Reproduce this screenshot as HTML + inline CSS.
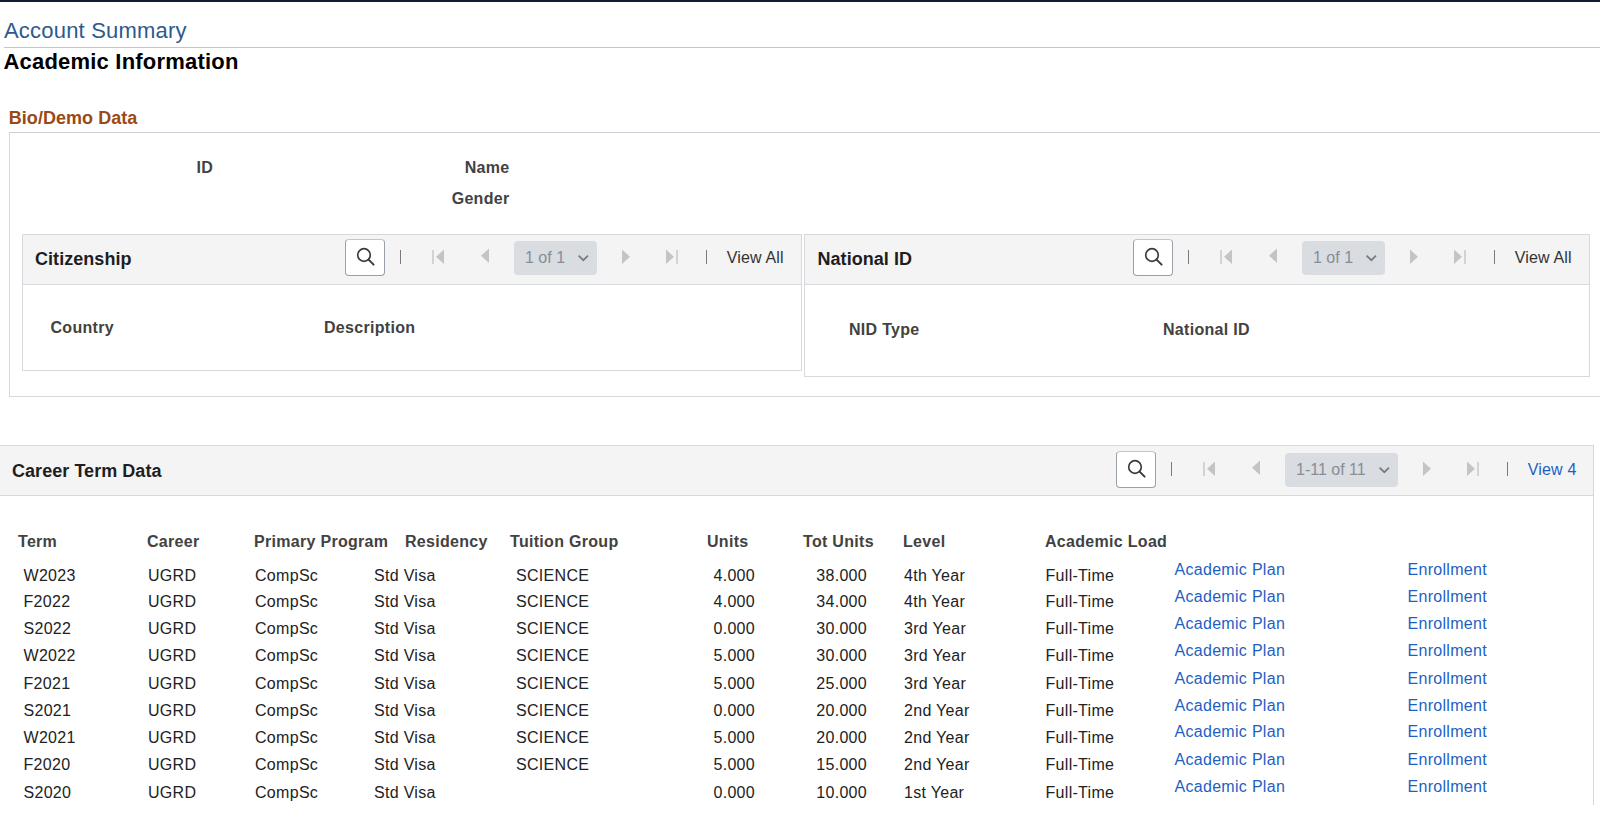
<!DOCTYPE html>
<html><head><meta charset="utf-8"><title>Academic Information</title>
<style>
html,body{margin:0;padding:0;background:#fff;width:1600px;height:829px;overflow:hidden;position:relative}
.t{position:absolute;font-family:"Liberation Sans", sans-serif;line-height:1;white-space:nowrap}
.b{position:absolute;box-sizing:content-box}
</style></head><body>
<div class="b" style="left:0px;top:0px;width:1600px;height:2px;background:#0f1d2e"></div>
<div class="t" style="left:4px;top:20px;font-size:22px;font-weight:400;color:#2c5a8c;letter-spacing:0.2px;">Account Summary</div>
<div class="b" style="left:4px;top:47px;width:1596px;height:1px;background:#c6c6c6"></div>
<div class="t" style="left:3.5px;top:51px;font-size:22px;font-weight:700;color:#000;letter-spacing:0.2px;">Academic Information</div>
<div class="t" style="left:8.75px;top:109px;font-size:18px;font-weight:700;color:#9a4a14;letter-spacing:0.05px;">Bio/Demo Data</div>
<div class="b" style="left:9px;top:132px;width:1600px;height:263px;border:1px solid #d6dadf;border-top-color:#c9d0d7;border-right:none"></div>
<div class="t" style="left:196.5px;top:160px;font-size:16px;font-weight:700;color:#424242;letter-spacing:0.3px;">ID</div>
<div class="t" style="right:1090.5px;top:160px;font-size:16px;font-weight:700;color:#424242;text-align:right;letter-spacing:0.3px;">Name</div>
<div class="t" style="right:1090.5px;top:191px;font-size:16px;font-weight:700;color:#424242;text-align:right;letter-spacing:0.3px;">Gender</div>
<div class="b" style="left:22px;top:234px;width:778px;height:135px;border:1px solid #d6dadf"></div>
<div class="b" style="left:23px;top:235px;width:778px;height:49px;background:#f4f4f4;border-bottom:1px solid #d6dadf"></div>
<div class="t" style="left:35px;top:250px;font-size:18px;font-weight:700;color:#1e1e1e;letter-spacing:0.05px;">Citizenship</div>
<div class="b" style="left:345px;top:239px;width:38px;height:35px;background:#fff;border:1px solid #9aa0a7;border-top-color:#c3c7cb;border-radius:4px"></div>
<svg class="b" style="left:355px;top:245px" width="22" height="22" viewBox="0 0 22 22"><circle cx="9" cy="10" r="6.3" fill="none" stroke="#3c3c3c" stroke-width="1.7"/><line x1="13.6" y1="14.6" x2="18.6" y2="19.6" stroke="#3c3c3c" stroke-width="2" stroke-linecap="round"/></svg>
<div class="b" style="left:400px;top:250px;width:1px;height:14px;background:#7a7684"></div>
<div class="b" style="left:432px;top:250px;width:2px;height:14px;background:#d3d3d3"></div>
<svg class="b" style="left:435px;top:249px" width="10" height="16" viewBox="0 0 10 16"><path d="M9 0.6 L9 15 L1 7.8 Z" fill="#c4c4c4"/></svg>
<svg class="b" style="left:480px;top:248px" width="10" height="16" viewBox="0 0 10 16"><path d="M9 0.4 L9 15 L1 7.7 Z" fill="#c4c4c4"/></svg>
<div class="b" style="left:514px;top:241px;width:83px;height:34px;background:#d9dce1;border-radius:4px"></div>
<div class="t" style="left:525px;top:250px;font-size:16px;font-weight:400;color:#878d95;">1 of 1</div>
<svg class="b" style="left:577px;top:253px" width="14" height="10" viewBox="0 0 14 10"><path d="M1.6 2.6 L6.3 7.2 L11 2.6" fill="none" stroke="#767c84" stroke-width="1.7"/></svg>
<svg class="b" style="left:621px;top:249px" width="10" height="16" viewBox="0 0 10 16"><path d="M1 0.6 L1 15 L9 7.8 Z" fill="#c4c4c4"/></svg>
<svg class="b" style="left:665px;top:249px" width="10" height="16" viewBox="0 0 10 16"><path d="M1 0.6 L1 15 L9 7.8 Z" fill="#c4c4c4"/></svg>
<div class="b" style="left:676px;top:250px;width:2px;height:14px;background:#d3d3d3"></div>
<div class="b" style="left:706px;top:250px;width:1px;height:14px;background:#7d7780"></div>
<div class="t" style="left:726.8px;top:250px;font-size:16px;font-weight:400;color:#333;letter-spacing:0.15px;">View All</div>
<div class="t" style="left:50.5px;top:320px;font-size:16px;font-weight:700;color:#424242;letter-spacing:0.3px;">Country</div>
<div class="t" style="left:324px;top:320px;font-size:16px;font-weight:700;color:#424242;letter-spacing:0.3px;">Description</div>
<div class="b" style="left:804px;top:234px;width:784px;height:141px;border:1px solid #d6dadf"></div>
<div class="b" style="left:805px;top:235px;width:784px;height:49px;background:#f4f4f4;border-bottom:1px solid #d6dadf"></div>
<div class="t" style="left:817.5px;top:250px;font-size:18px;font-weight:700;color:#1e1e1e;letter-spacing:0.05px;">National ID</div>
<div class="b" style="left:1133px;top:239px;width:38px;height:35px;background:#fff;border:1px solid #9aa0a7;border-top-color:#c3c7cb;border-radius:4px"></div>
<svg class="b" style="left:1143px;top:245px" width="22" height="22" viewBox="0 0 22 22"><circle cx="9" cy="10" r="6.3" fill="none" stroke="#3c3c3c" stroke-width="1.7"/><line x1="13.6" y1="14.6" x2="18.6" y2="19.6" stroke="#3c3c3c" stroke-width="2" stroke-linecap="round"/></svg>
<div class="b" style="left:1188px;top:250px;width:1px;height:14px;background:#7a7684"></div>
<div class="b" style="left:1220px;top:250px;width:2px;height:14px;background:#d3d3d3"></div>
<svg class="b" style="left:1223px;top:249px" width="10" height="16" viewBox="0 0 10 16"><path d="M9 0.6 L9 15 L1 7.8 Z" fill="#c4c4c4"/></svg>
<svg class="b" style="left:1268px;top:248px" width="10" height="16" viewBox="0 0 10 16"><path d="M9 0.4 L9 15 L1 7.7 Z" fill="#c4c4c4"/></svg>
<div class="b" style="left:1302px;top:241px;width:83px;height:34px;background:#d9dce1;border-radius:4px"></div>
<div class="t" style="left:1313px;top:250px;font-size:16px;font-weight:400;color:#878d95;">1 of 1</div>
<svg class="b" style="left:1365px;top:253px" width="14" height="10" viewBox="0 0 14 10"><path d="M1.6 2.6 L6.3 7.2 L11 2.6" fill="none" stroke="#767c84" stroke-width="1.7"/></svg>
<svg class="b" style="left:1409px;top:249px" width="10" height="16" viewBox="0 0 10 16"><path d="M1 0.6 L1 15 L9 7.8 Z" fill="#c4c4c4"/></svg>
<svg class="b" style="left:1453px;top:249px" width="10" height="16" viewBox="0 0 10 16"><path d="M1 0.6 L1 15 L9 7.8 Z" fill="#c4c4c4"/></svg>
<div class="b" style="left:1464px;top:250px;width:2px;height:14px;background:#d3d3d3"></div>
<div class="b" style="left:1494px;top:250px;width:1px;height:14px;background:#7d7780"></div>
<div class="t" style="left:1514.8px;top:250px;font-size:16px;font-weight:400;color:#333;letter-spacing:0.15px;">View All</div>
<div class="t" style="left:849px;top:322px;font-size:16px;font-weight:700;color:#424242;letter-spacing:0.3px;">NID Type</div>
<div class="t" style="left:1163px;top:322px;font-size:16px;font-weight:700;color:#424242;letter-spacing:0.3px;">National ID</div>
<div class="b" style="left:-1px;top:445px;width:1593px;height:359px;border:1px solid #d6dadf;border-bottom:none"></div>
<div class="b" style="left:0px;top:446px;width:1593px;height:49px;background:#f4f4f4;border-bottom:1px solid #d6dadf"></div>
<div class="t" style="left:12px;top:462px;font-size:18px;font-weight:700;color:#1e1e1e;letter-spacing:0.05px;">Career Term Data</div>
<div class="b" style="left:1116px;top:451px;width:38px;height:35px;background:#fff;border:1px solid #9aa0a7;border-top-color:#c3c7cb;border-radius:4px"></div>
<svg class="b" style="left:1126px;top:457px" width="22" height="22" viewBox="0 0 22 22"><circle cx="9" cy="10" r="6.3" fill="none" stroke="#3c3c3c" stroke-width="1.7"/><line x1="13.6" y1="14.6" x2="18.6" y2="19.6" stroke="#3c3c3c" stroke-width="2" stroke-linecap="round"/></svg>
<div class="b" style="left:1171px;top:462px;width:1px;height:14px;background:#7a7684"></div>
<div class="b" style="left:1203px;top:462px;width:2px;height:14px;background:#d3d3d3"></div>
<svg class="b" style="left:1206px;top:461px" width="10" height="16" viewBox="0 0 10 16"><path d="M9 0.6 L9 15 L1 7.8 Z" fill="#c4c4c4"/></svg>
<svg class="b" style="left:1251px;top:460px" width="10" height="16" viewBox="0 0 10 16"><path d="M9 0.4 L9 15 L1 7.7 Z" fill="#c4c4c4"/></svg>
<div class="b" style="left:1285px;top:453px;width:113px;height:34px;background:#d9dce1;border-radius:4px"></div>
<div class="t" style="left:1296px;top:462px;font-size:16px;font-weight:400;color:#878d95;">1-11 of 11</div>
<svg class="b" style="left:1378px;top:465px" width="14" height="10" viewBox="0 0 14 10"><path d="M1.6 2.6 L6.3 7.2 L11 2.6" fill="none" stroke="#767c84" stroke-width="1.7"/></svg>
<svg class="b" style="left:1422px;top:461px" width="10" height="16" viewBox="0 0 10 16"><path d="M1 0.6 L1 15 L9 7.8 Z" fill="#c4c4c4"/></svg>
<svg class="b" style="left:1466px;top:461px" width="10" height="16" viewBox="0 0 10 16"><path d="M1 0.6 L1 15 L9 7.8 Z" fill="#c4c4c4"/></svg>
<div class="b" style="left:1477px;top:462px;width:2px;height:14px;background:#d3d3d3"></div>
<div class="b" style="left:1507px;top:462px;width:1px;height:14px;background:#7d7780"></div>
<div class="t" style="left:1527.8px;top:462px;font-size:16px;font-weight:400;color:#1f5fc4;letter-spacing:0.15px;">View 4</div>
<div class="t" style="left:18px;top:534px;font-size:16px;font-weight:700;color:#424242;letter-spacing:0.3px;">Term</div>
<div class="t" style="left:147px;top:534px;font-size:16px;font-weight:700;color:#424242;letter-spacing:0.3px;">Career</div>
<div class="t" style="left:254px;top:534px;font-size:16px;font-weight:700;color:#424242;letter-spacing:0.3px;">Primary Program</div>
<div class="t" style="left:405px;top:534px;font-size:16px;font-weight:700;color:#424242;letter-spacing:0.3px;">Residency</div>
<div class="t" style="left:510px;top:534px;font-size:16px;font-weight:700;color:#424242;letter-spacing:0.3px;">Tuition Group</div>
<div class="t" style="left:707px;top:534px;font-size:16px;font-weight:700;color:#424242;letter-spacing:0.3px;">Units</div>
<div class="t" style="left:803px;top:534px;font-size:16px;font-weight:700;color:#424242;letter-spacing:0.3px;">Tot Units</div>
<div class="t" style="left:903px;top:534px;font-size:16px;font-weight:700;color:#424242;letter-spacing:0.3px;">Level</div>
<div class="t" style="left:1045px;top:534px;font-size:16px;font-weight:700;color:#424242;letter-spacing:0.3px;">Academic Load</div>
<div class="t" style="left:23.5px;top:568px;font-size:16px;font-weight:400;color:#222;letter-spacing:0.3px;">W2023</div>
<div class="t" style="left:148px;top:568px;font-size:16px;font-weight:400;color:#222;letter-spacing:0.3px;">UGRD</div>
<div class="t" style="left:255px;top:568px;font-size:16px;font-weight:400;color:#222;letter-spacing:0.3px;">CompSc</div>
<div class="t" style="left:374px;top:568px;font-size:16px;font-weight:400;color:#222;letter-spacing:0.3px;">Std Visa</div>
<div class="t" style="left:516px;top:568px;font-size:16px;font-weight:400;color:#222;letter-spacing:0.3px;">SCIENCE</div>
<div class="t" style="right:845px;top:568px;font-size:16px;font-weight:400;color:#222;text-align:right;letter-spacing:0.3px;">4.000</div>
<div class="t" style="right:733px;top:568px;font-size:16px;font-weight:400;color:#222;text-align:right;letter-spacing:0.3px;">38.000</div>
<div class="t" style="left:904px;top:568px;font-size:16px;font-weight:400;color:#222;letter-spacing:0.3px;">4th Year</div>
<div class="t" style="left:1045.5px;top:568px;font-size:16px;font-weight:400;color:#222;letter-spacing:0.3px;">Full-Time</div>
<div class="t" style="left:1174.5px;top:562px;font-size:16px;font-weight:400;color:#1f5fc4;letter-spacing:0.3px;">Academic Plan</div>
<div class="t" style="left:1407.5px;top:562px;font-size:16px;font-weight:400;color:#1f5fc4;letter-spacing:0.3px;">Enrollment</div>
<div class="t" style="left:23.5px;top:594px;font-size:16px;font-weight:400;color:#222;letter-spacing:0.3px;">F2022</div>
<div class="t" style="left:148px;top:594px;font-size:16px;font-weight:400;color:#222;letter-spacing:0.3px;">UGRD</div>
<div class="t" style="left:255px;top:594px;font-size:16px;font-weight:400;color:#222;letter-spacing:0.3px;">CompSc</div>
<div class="t" style="left:374px;top:594px;font-size:16px;font-weight:400;color:#222;letter-spacing:0.3px;">Std Visa</div>
<div class="t" style="left:516px;top:594px;font-size:16px;font-weight:400;color:#222;letter-spacing:0.3px;">SCIENCE</div>
<div class="t" style="right:845px;top:594px;font-size:16px;font-weight:400;color:#222;text-align:right;letter-spacing:0.3px;">4.000</div>
<div class="t" style="right:733px;top:594px;font-size:16px;font-weight:400;color:#222;text-align:right;letter-spacing:0.3px;">34.000</div>
<div class="t" style="left:904px;top:594px;font-size:16px;font-weight:400;color:#222;letter-spacing:0.3px;">4th Year</div>
<div class="t" style="left:1045.5px;top:594px;font-size:16px;font-weight:400;color:#222;letter-spacing:0.3px;">Full-Time</div>
<div class="t" style="left:1174.5px;top:589px;font-size:16px;font-weight:400;color:#1f5fc4;letter-spacing:0.3px;">Academic Plan</div>
<div class="t" style="left:1407.5px;top:589px;font-size:16px;font-weight:400;color:#1f5fc4;letter-spacing:0.3px;">Enrollment</div>
<div class="t" style="left:23.5px;top:621px;font-size:16px;font-weight:400;color:#222;letter-spacing:0.3px;">S2022</div>
<div class="t" style="left:148px;top:621px;font-size:16px;font-weight:400;color:#222;letter-spacing:0.3px;">UGRD</div>
<div class="t" style="left:255px;top:621px;font-size:16px;font-weight:400;color:#222;letter-spacing:0.3px;">CompSc</div>
<div class="t" style="left:374px;top:621px;font-size:16px;font-weight:400;color:#222;letter-spacing:0.3px;">Std Visa</div>
<div class="t" style="left:516px;top:621px;font-size:16px;font-weight:400;color:#222;letter-spacing:0.3px;">SCIENCE</div>
<div class="t" style="right:845px;top:621px;font-size:16px;font-weight:400;color:#222;text-align:right;letter-spacing:0.3px;">0.000</div>
<div class="t" style="right:733px;top:621px;font-size:16px;font-weight:400;color:#222;text-align:right;letter-spacing:0.3px;">30.000</div>
<div class="t" style="left:904px;top:621px;font-size:16px;font-weight:400;color:#222;letter-spacing:0.3px;">3rd Year</div>
<div class="t" style="left:1045.5px;top:621px;font-size:16px;font-weight:400;color:#222;letter-spacing:0.3px;">Full-Time</div>
<div class="t" style="left:1174.5px;top:616px;font-size:16px;font-weight:400;color:#1f5fc4;letter-spacing:0.3px;">Academic Plan</div>
<div class="t" style="left:1407.5px;top:616px;font-size:16px;font-weight:400;color:#1f5fc4;letter-spacing:0.3px;">Enrollment</div>
<div class="t" style="left:23.5px;top:648px;font-size:16px;font-weight:400;color:#222;letter-spacing:0.3px;">W2022</div>
<div class="t" style="left:148px;top:648px;font-size:16px;font-weight:400;color:#222;letter-spacing:0.3px;">UGRD</div>
<div class="t" style="left:255px;top:648px;font-size:16px;font-weight:400;color:#222;letter-spacing:0.3px;">CompSc</div>
<div class="t" style="left:374px;top:648px;font-size:16px;font-weight:400;color:#222;letter-spacing:0.3px;">Std Visa</div>
<div class="t" style="left:516px;top:648px;font-size:16px;font-weight:400;color:#222;letter-spacing:0.3px;">SCIENCE</div>
<div class="t" style="right:845px;top:648px;font-size:16px;font-weight:400;color:#222;text-align:right;letter-spacing:0.3px;">5.000</div>
<div class="t" style="right:733px;top:648px;font-size:16px;font-weight:400;color:#222;text-align:right;letter-spacing:0.3px;">30.000</div>
<div class="t" style="left:904px;top:648px;font-size:16px;font-weight:400;color:#222;letter-spacing:0.3px;">3rd Year</div>
<div class="t" style="left:1045.5px;top:648px;font-size:16px;font-weight:400;color:#222;letter-spacing:0.3px;">Full-Time</div>
<div class="t" style="left:1174.5px;top:643px;font-size:16px;font-weight:400;color:#1f5fc4;letter-spacing:0.3px;">Academic Plan</div>
<div class="t" style="left:1407.5px;top:643px;font-size:16px;font-weight:400;color:#1f5fc4;letter-spacing:0.3px;">Enrollment</div>
<div class="t" style="left:23.5px;top:676px;font-size:16px;font-weight:400;color:#222;letter-spacing:0.3px;">F2021</div>
<div class="t" style="left:148px;top:676px;font-size:16px;font-weight:400;color:#222;letter-spacing:0.3px;">UGRD</div>
<div class="t" style="left:255px;top:676px;font-size:16px;font-weight:400;color:#222;letter-spacing:0.3px;">CompSc</div>
<div class="t" style="left:374px;top:676px;font-size:16px;font-weight:400;color:#222;letter-spacing:0.3px;">Std Visa</div>
<div class="t" style="left:516px;top:676px;font-size:16px;font-weight:400;color:#222;letter-spacing:0.3px;">SCIENCE</div>
<div class="t" style="right:845px;top:676px;font-size:16px;font-weight:400;color:#222;text-align:right;letter-spacing:0.3px;">5.000</div>
<div class="t" style="right:733px;top:676px;font-size:16px;font-weight:400;color:#222;text-align:right;letter-spacing:0.3px;">25.000</div>
<div class="t" style="left:904px;top:676px;font-size:16px;font-weight:400;color:#222;letter-spacing:0.3px;">3rd Year</div>
<div class="t" style="left:1045.5px;top:676px;font-size:16px;font-weight:400;color:#222;letter-spacing:0.3px;">Full-Time</div>
<div class="t" style="left:1174.5px;top:671px;font-size:16px;font-weight:400;color:#1f5fc4;letter-spacing:0.3px;">Academic Plan</div>
<div class="t" style="left:1407.5px;top:671px;font-size:16px;font-weight:400;color:#1f5fc4;letter-spacing:0.3px;">Enrollment</div>
<div class="t" style="left:23.5px;top:703px;font-size:16px;font-weight:400;color:#222;letter-spacing:0.3px;">S2021</div>
<div class="t" style="left:148px;top:703px;font-size:16px;font-weight:400;color:#222;letter-spacing:0.3px;">UGRD</div>
<div class="t" style="left:255px;top:703px;font-size:16px;font-weight:400;color:#222;letter-spacing:0.3px;">CompSc</div>
<div class="t" style="left:374px;top:703px;font-size:16px;font-weight:400;color:#222;letter-spacing:0.3px;">Std Visa</div>
<div class="t" style="left:516px;top:703px;font-size:16px;font-weight:400;color:#222;letter-spacing:0.3px;">SCIENCE</div>
<div class="t" style="right:845px;top:703px;font-size:16px;font-weight:400;color:#222;text-align:right;letter-spacing:0.3px;">0.000</div>
<div class="t" style="right:733px;top:703px;font-size:16px;font-weight:400;color:#222;text-align:right;letter-spacing:0.3px;">20.000</div>
<div class="t" style="left:904px;top:703px;font-size:16px;font-weight:400;color:#222;letter-spacing:0.3px;">2nd Year</div>
<div class="t" style="left:1045.5px;top:703px;font-size:16px;font-weight:400;color:#222;letter-spacing:0.3px;">Full-Time</div>
<div class="t" style="left:1174.5px;top:698px;font-size:16px;font-weight:400;color:#1f5fc4;letter-spacing:0.3px;">Academic Plan</div>
<div class="t" style="left:1407.5px;top:698px;font-size:16px;font-weight:400;color:#1f5fc4;letter-spacing:0.3px;">Enrollment</div>
<div class="t" style="left:23.5px;top:730px;font-size:16px;font-weight:400;color:#222;letter-spacing:0.3px;">W2021</div>
<div class="t" style="left:148px;top:730px;font-size:16px;font-weight:400;color:#222;letter-spacing:0.3px;">UGRD</div>
<div class="t" style="left:255px;top:730px;font-size:16px;font-weight:400;color:#222;letter-spacing:0.3px;">CompSc</div>
<div class="t" style="left:374px;top:730px;font-size:16px;font-weight:400;color:#222;letter-spacing:0.3px;">Std Visa</div>
<div class="t" style="left:516px;top:730px;font-size:16px;font-weight:400;color:#222;letter-spacing:0.3px;">SCIENCE</div>
<div class="t" style="right:845px;top:730px;font-size:16px;font-weight:400;color:#222;text-align:right;letter-spacing:0.3px;">5.000</div>
<div class="t" style="right:733px;top:730px;font-size:16px;font-weight:400;color:#222;text-align:right;letter-spacing:0.3px;">20.000</div>
<div class="t" style="left:904px;top:730px;font-size:16px;font-weight:400;color:#222;letter-spacing:0.3px;">2nd Year</div>
<div class="t" style="left:1045.5px;top:730px;font-size:16px;font-weight:400;color:#222;letter-spacing:0.3px;">Full-Time</div>
<div class="t" style="left:1174.5px;top:724px;font-size:16px;font-weight:400;color:#1f5fc4;letter-spacing:0.3px;">Academic Plan</div>
<div class="t" style="left:1407.5px;top:724px;font-size:16px;font-weight:400;color:#1f5fc4;letter-spacing:0.3px;">Enrollment</div>
<div class="t" style="left:23.5px;top:757px;font-size:16px;font-weight:400;color:#222;letter-spacing:0.3px;">F2020</div>
<div class="t" style="left:148px;top:757px;font-size:16px;font-weight:400;color:#222;letter-spacing:0.3px;">UGRD</div>
<div class="t" style="left:255px;top:757px;font-size:16px;font-weight:400;color:#222;letter-spacing:0.3px;">CompSc</div>
<div class="t" style="left:374px;top:757px;font-size:16px;font-weight:400;color:#222;letter-spacing:0.3px;">Std Visa</div>
<div class="t" style="left:516px;top:757px;font-size:16px;font-weight:400;color:#222;letter-spacing:0.3px;">SCIENCE</div>
<div class="t" style="right:845px;top:757px;font-size:16px;font-weight:400;color:#222;text-align:right;letter-spacing:0.3px;">5.000</div>
<div class="t" style="right:733px;top:757px;font-size:16px;font-weight:400;color:#222;text-align:right;letter-spacing:0.3px;">15.000</div>
<div class="t" style="left:904px;top:757px;font-size:16px;font-weight:400;color:#222;letter-spacing:0.3px;">2nd Year</div>
<div class="t" style="left:1045.5px;top:757px;font-size:16px;font-weight:400;color:#222;letter-spacing:0.3px;">Full-Time</div>
<div class="t" style="left:1174.5px;top:752px;font-size:16px;font-weight:400;color:#1f5fc4;letter-spacing:0.3px;">Academic Plan</div>
<div class="t" style="left:1407.5px;top:752px;font-size:16px;font-weight:400;color:#1f5fc4;letter-spacing:0.3px;">Enrollment</div>
<div class="t" style="left:23.5px;top:785px;font-size:16px;font-weight:400;color:#222;letter-spacing:0.3px;">S2020</div>
<div class="t" style="left:148px;top:785px;font-size:16px;font-weight:400;color:#222;letter-spacing:0.3px;">UGRD</div>
<div class="t" style="left:255px;top:785px;font-size:16px;font-weight:400;color:#222;letter-spacing:0.3px;">CompSc</div>
<div class="t" style="left:374px;top:785px;font-size:16px;font-weight:400;color:#222;letter-spacing:0.3px;">Std Visa</div>
<div class="t" style="right:845px;top:785px;font-size:16px;font-weight:400;color:#222;text-align:right;letter-spacing:0.3px;">0.000</div>
<div class="t" style="right:733px;top:785px;font-size:16px;font-weight:400;color:#222;text-align:right;letter-spacing:0.3px;">10.000</div>
<div class="t" style="left:904px;top:785px;font-size:16px;font-weight:400;color:#222;letter-spacing:0.3px;">1st Year</div>
<div class="t" style="left:1045.5px;top:785px;font-size:16px;font-weight:400;color:#222;letter-spacing:0.3px;">Full-Time</div>
<div class="t" style="left:1174.5px;top:779px;font-size:16px;font-weight:400;color:#1f5fc4;letter-spacing:0.3px;">Academic Plan</div>
<div class="t" style="left:1407.5px;top:779px;font-size:16px;font-weight:400;color:#1f5fc4;letter-spacing:0.3px;">Enrollment</div>
</body></html>
